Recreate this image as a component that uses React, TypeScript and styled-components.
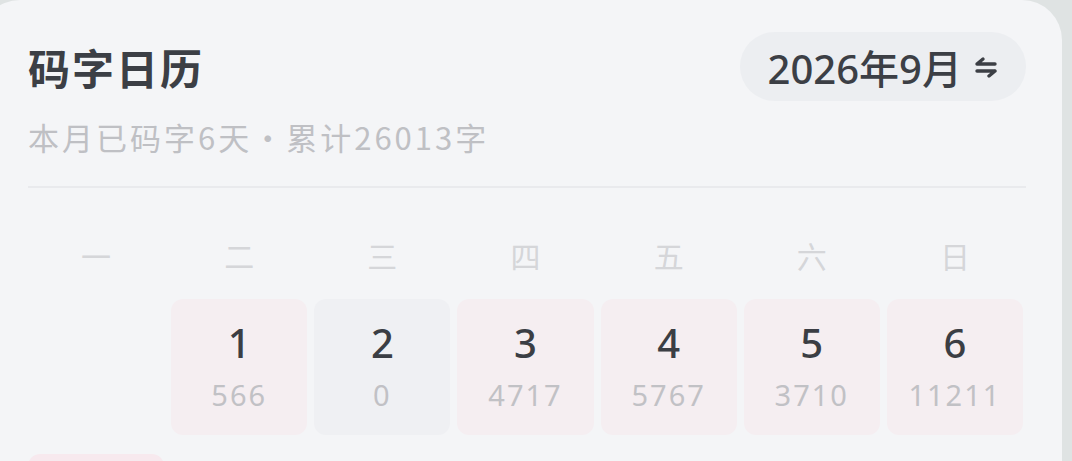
import React from 'react';
import styled, { createGlobalStyle } from 'styled-components';

const GlobalStyle = createGlobalStyle`
  html, body {
    margin: 0;
    padding: 0;
    background: #dfe3e3;
    overflow: hidden;
  }
  body {
    font-family: 'Noto Sans', 'Noto Sans CJK SC', sans-serif;
  }
`;

const Card = styled.div`
  position: relative;
  margin-left: -20px;
  width: 1082px;
  height: 461px;
  box-sizing: border-box;
  padding: 32px 36px 0 48px;
  background: #f4f5f7;
  border-radius: 40px 40px 0 0;
  overflow: hidden;
`;

const Header = styled.div`
  display: flex;
  align-items: center;
  justify-content: space-between;
  height: 69px;
`;

const Title = styled.h1`
  margin: 0;
  font-family: 'Noto Sans CJK SC', sans-serif;
  font-size: 42px;
  font-weight: 600;
  letter-spacing: 2px;
  color: #3c3f45;
`;

const MonthPill = styled.button`
  display: flex;
  align-items: center;
  gap: 12px;
  height: 69px;
  padding: 0 28px;
  border: none;
  border-radius: 35px;
  background: #eceef1;
  color: #3c3f45;
  font-family: 'Noto Sans', 'Noto Sans CJK SC', sans-serif;
  font-size: 40px;
  font-weight: 500;
`;

const Subtitle = styled.div`
  margin-top: 16px;
  font-family: 'Noto Sans CJK SC', sans-serif;
  font-size: 31px;
  line-height: 40px;
  letter-spacing: 3px;
  color: #bfc0c4;
`;

const Divider = styled.div`
  margin-top: 29px;
  height: 2px;
  background: #e9eaed;
`;

const Week = styled.div`
  display: grid;
  grid-template-columns: repeat(7, 1fr);
  column-gap: 7px;
  margin-top: 47px;
  padding-right: 3px;
`;

const WeekDay = styled.div`
  text-align: center;
  font-family: 'Noto Sans CJK SC', sans-serif;
  font-size: 30px;
  line-height: 40px;
  color: #d5d6d9;
`;

const Days = styled.div`
  display: grid;
  grid-template-columns: repeat(7, 1fr);
  column-gap: 7px;
  row-gap: 19px;
  margin-top: 24px;
  padding-right: 3px;
`;

type Tone = 'done' | 'empty' | 'today' | 'future' | 'blank';

const tones: Record<Tone, string> = {
  done: '#f5eef1',
  empty: '#eff0f3',
  today: '#f7e9ee',
  future: 'transparent',
  blank: 'transparent',
};

const Cell = styled.div<{ $tone: Tone }>`
  aspect-ratio: 1;
  display: flex;
  flex-direction: column;
  align-items: center;
  justify-content: center;
  gap: 12px;
  border-radius: 12px;
  background: ${(p) => tones[p.$tone]};
`;

const DayNum = styled.div`
  font-size: 40px;
  line-height: 44px;
  font-weight: 500;
  color: #3b3e44;
`;

const Count = styled.div`
  font-size: 29px;
  line-height: 36px;
  letter-spacing: 2px;
  color: #c1c1c5;
`;

const SwapIcon = () => (
  <svg width="24" height="22" viewBox="0 0 24 22" fill="none">
    <path d="M3 8 H21 M3 8 L9 3" stroke="#3c3f45" strokeWidth="3.4" strokeLinecap="round" strokeLinejoin="round" />
    <path d="M3 15 H21 M21 15 L15 20" stroke="#3c3f45" strokeWidth="3.4" strokeLinecap="round" strokeLinejoin="round" />
  </svg>
);

const weekdays = ['一', '二', '三', '四', '五', '六', '日'];
const counts: Record<number, number> = { 1: 566, 2: 0, 3: 4717, 4: 5767, 5: 3710, 6: 11211 };

const App = () => {
  // Sept 2026 starts on a Tuesday; day 7 is today, the rest are still ahead
  const cells: { day?: number; tone: Tone }[] = [{ tone: 'blank' }];
  for (let d = 1; d <= 30; d++) {
    if (d in counts) cells.push({ day: d, tone: counts[d] > 0 ? 'done' : 'empty' });
    else if (d === 7) cells.push({ day: d, tone: 'today' });
    else cells.push({ day: d, tone: 'future' });
  }

  return (
    <>
      <GlobalStyle />
      <Card>
        <Header>
          <Title>码字日历</Title>
          <MonthPill>
            <span>2026年9月</span>
            <SwapIcon />
          </MonthPill>
        </Header>
        <Subtitle>本月已码字6天・累计26013字</Subtitle>
        <Divider />
        <Week>
          {weekdays.map((w) => (
            <WeekDay key={w}>{w}</WeekDay>
          ))}
        </Week>
        <Days>
          {cells.map((c, i) => (
            <Cell key={i} $tone={c.tone}>
              {c.day !== undefined && <DayNum>{c.day}</DayNum>}
              {c.day !== undefined && c.day in counts && <Count>{counts[c.day]}</Count>}
            </Cell>
          ))}
        </Days>
      </Card>
    </>
  );
};

export default App;
